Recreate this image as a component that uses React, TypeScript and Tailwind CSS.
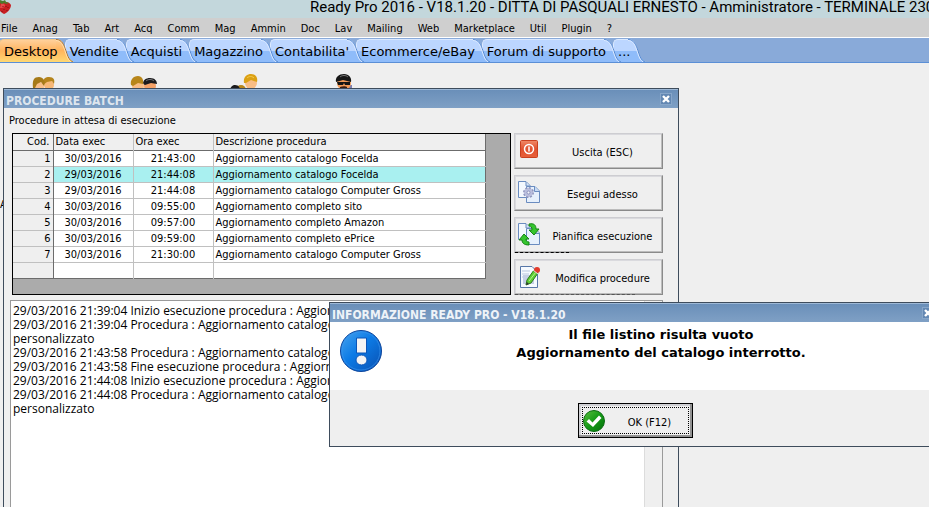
import type { ReactNode } from 'react';

const menuItems = [
  'File', 'Anag', 'Tab', 'Art', 'Acq', 'Comm', 'Mag', 'Ammin', 'Doc',
  'Lav', 'Mailing', 'Web', 'Marketplace', 'Util', 'Plugin', '?',
];

const tabs = [
  'Desktop', 'Vendite', 'Acquisti', 'Magazzino', "Contabilita'",
  'Ecommerce/eBay', 'Forum di supporto', '...',
];

const procedures = [
  { cod: 1, date: '30/03/2016', time: '21:43:00', description: 'Aggiornamento catalogo Focelda' },
  { cod: 2, date: '29/03/2016', time: '21:44:08', description: 'Aggiornamento catalogo Focelda' },
  { cod: 3, date: '29/03/2016', time: '21:44:08', description: 'Aggiornamento catalogo Computer Gross' },
  { cod: 4, date: '30/03/2016', time: '09:55:00', description: 'Aggiornamento completo sito' },
  { cod: 5, date: '30/03/2016', time: '09:57:00', description: 'Aggiornamento completo Amazon' },
  { cod: 6, date: '30/03/2016', time: '09:59:00', description: 'Aggiornamento completo ePrice' },
  { cod: 7, date: '30/03/2016', time: '21:30:00', description: 'Aggiornamento catalogo Computer Gross' },
];

const selectedCod = 2;

const log = [
  '29/03/2016 21:39:04 Inizio esecuzione procedura : Aggiornamento catalogo Focelda',
  '29/03/2016 21:39:04 Procedura : Aggiornamento catalogo Focelda',
  'personalizzato',
  '29/03/2016 21:43:58 Procedura : Aggiornamento catalogo Focelda',
  '29/03/2016 21:43:58 Fine esecuzione procedura : Aggiornamento catalogo Focelda',
  '29/03/2016 21:44:08 Inizio esecuzione procedura : Aggiornamento catalogo Focelda',
  '29/03/2016 21:44:08 Procedura : Aggiornamento catalogo Focelda',
  'personalizzato',
].join('\n');

const StrawberryIcon = () => (
  <svg className="h-[14px] w-[11px] shrink-0" viewBox="0 0 11 14" aria-hidden="true">
    <path d="M0 3C3 1 9 1 11 5C11 9 7 13 4 14C2 13 1 12 0 11Z" fill="#c81f22" />
    <path d="M1 4C3 3 5 4 5 6C4 8 2 8 0 8Z" fill="#e5484a" />
    <path d="M0 0L3 1L5 0L6 2L9 3L6 4L4 3L2 4L0 3Z" fill="#4c7a2c" />
    <path d="M3 6v1M6 6v1M8 7v1M4 9v1M7 10v1M2 11v1" stroke="#7f1014" />
  </svg>
);

const PeopleIcon = ({ kind }: { kind: number }) => {
  if (kind === 0) {
    return (
      <svg className="h-[24px] w-[24px]" viewBox="0 0 24 24" aria-hidden="true">
        <circle cx="17" cy="9" r="5" fill="#f7b878" />
        <path d="M11 9C10 2 14 1 17 1C22 1 23 4 22 8L20 5L15 6Z" fill="#b5841c" />
        <circle cx="7" cy="11" r="5" fill="#f9c08a" />
        <path d="M1 12C0 4 2 1 7 1C11 1 14 5 12 10L9 6L5 8L3 12Z" fill="#a67a18" />
      </svg>
    );
  }
  if (kind === 1) {
    return (
      <svg className="h-[24px] w-[28px]" viewBox="0 0 28 24" aria-hidden="true">
        <circle cx="20" cy="10" r="6" fill="#f5a268" />
        <path d="M13 8C13 4 16 2 20 2C25 2 27 5 27 8L21 7L15 9Z" fill="#1b1b1d" />
        <path d="M16 5C18 3 22 3 24 5" stroke="#77777b" fill="none" />
        <circle cx="8" cy="10" r="6" fill="#f9bd85" />
        <path d="M1 9C0 4 3 0 8 0C12 0 14 4 13 8L8 7L3 10Z" fill="#b8861a" />
      </svg>
    );
  }
  if (kind === 2) {
    return (
      <svg className="h-[26px] w-[28px]" viewBox="0 0 28 26" aria-hidden="true">
        <circle cx="11" cy="16" r="5" fill="#b8861a" />
        <path d="M0 18C0 13 2 11 5 11C9 11 10 14 10 17Z" fill="#1b1b1d" />
        <circle cx="21" cy="9" r="6" fill="#f9bd85" />
        <path d="M14 9C13 3 17 0 21 0C26 0 28 4 27 8L21 6L16 9Z" fill="#dca114" />
        <path d="M17 4C19 2 22 2 24 4" stroke="#f6cf4f" fill="none" />
      </svg>
    );
  }
  return (
    <svg className="h-[26px] w-[18px]" viewBox="0 0 18 26" aria-hidden="true">
      <path d="M12 11h5v8h-5Z" fill="#7b7fb4" />
      <circle cx="9" cy="9" r="7" fill="#f29a57" />
      <path d="M1 8C0 3 4 0 9 0C14 0 17 4 16 8L8 6Z" fill="#161616" />
      <path d="M5 3C7 1 11 1 13 3" stroke="#777" fill="none" />
      <path d="M2 8H15V11H10L9 9L8 11H3Z" fill="#141414" />
      <path d="M5 13C7 12 11 12 12 13V18H5Z" fill="#3a1c10" />
    </svg>
  );
};

const PowerIcon = () => (
  <svg className="mt-px size-[18px]" viewBox="0 0 18 18" aria-hidden="true">
    <defs>
      <linearGradient id="power" x1="0" y1="0" x2="0" y2="1">
        <stop offset="0" stopColor="#f08a68" />
        <stop offset="0.5" stopColor="#e0512f" />
        <stop offset="1" stopColor="#e8603a" />
      </linearGradient>
    </defs>
    <rect x="0.5" y="0.5" width="17" height="17" rx="1" fill="url(#power)" stroke="#c9401f" />
    <circle cx="9" cy="9" r="4.5" fill="none" stroke="#fff" strokeWidth="1.5" />
    <path d="M9 6.5v5" stroke="#fff" strokeWidth="1.5" />
  </svg>
);

const Pages = () => (
  <>
    <path d="M0.5 0.5H8L12 4.5V16.5H0.5Z" fill="#f3f8fe" stroke="#6a8cc0" />
    <path d="M8 1V5H12" fill="#d5e4f7" stroke="#6a8cc0" />
    <path d="M8.5 5.5H17L21.5 10V21.5H8.5Z" fill="#e6f0fc" stroke="#6a8cc0" />
    <path d="M16.5 5.5V10.5H21.5" fill="#c7dbf5" stroke="#6a8cc0" />
  </>
);

const RunIcon = () => (
  <svg className="size-[23px]" viewBox="0 0 23 23" aria-hidden="true">
    <Pages />
    <circle cx="10.5" cy="11.5" r="4.5" fill="#c3c8e2" stroke="#8d94bd" strokeWidth="2" strokeDasharray="2 1.5" />
    <circle cx="10.5" cy="11.5" r="4" fill="#b9bedd" />
    <circle cx="10.5" cy="11.5" r="1.5" fill="#f3f5fb" stroke="#8d94bd" />
  </svg>
);

const ScheduleIcon = () => (
  <svg className="size-[23px]" viewBox="0 0 23 23" aria-hidden="true">
    <Pages />
    <path d="M11 1C16 0 18 2 18 6H21L16 12L11 7H14C14 4 13 3 11 3Z" fill="#35c52e" stroke="#168415" />
    <path d="M11 22C6 22 4 20 4 17H1L6 11L11 16H8C8 18 9 19 11 19Z" fill="#35c52e" stroke="#168415" />
  </svg>
);

const EditIcon = () => (
  <svg className="size-[23px]" viewBox="0 0 23 23" aria-hidden="true">
    <path d="M2.5 1.5H14L19.5 7V22.5H2.5Z" fill="#f6faff" stroke="#5777a8" />
    <path d="M4 6h8M4 9h7M4 12h5" stroke="#b9c7df" />
    <rect x="5" y="10" width="11" height="9" fill="#c5cfe5" />
    <path d="M9 15L16 5L20 8L13 18L8 20Z" fill="#5fce34" stroke="#2c7a1c" />
    <path d="M11 16L18 7" stroke="#b3f08d" />
    <path d="M8 20L9 17L11 19Z" fill="#333" />
    <circle cx="19" cy="5" r="3" fill="#e23a2a" />
    <path d="M15 5L20 9" stroke="#e3e3e3" />
  </svg>
);

const InfoIcon = () => (
  <svg className="size-[42px] shrink-0" viewBox="0 0 42 42" aria-hidden="true">
    <defs>
      <linearGradient id="info" x1="0" y1="0" x2="1" y2="1">
        <stop offset="0" stopColor="#4aa5ee" />
        <stop offset="0.45" stopColor="#0c7be6" />
        <stop offset="1" stopColor="#0a4fb0" />
      </linearGradient>
    </defs>
    <circle cx="21" cy="21" r="20.5" fill="url(#info)" stroke="#0c459c" />
    <circle cx="21" cy="21" r="19" fill="none" stroke="#3c95ec" opacity="0.6" />
    <path d="M16.5 8H26.5V23H16.5Z" fill="#f4f4f4" stroke="#0b55b8" />
    <ellipse cx="21.5" cy="30" rx="5.5" ry="5" fill="#f4f4f4" stroke="#0b55b8" />
  </svg>
);

const CheckIcon = () => (
  <svg className="size-[22px] shrink-0" viewBox="0 0 22 22" aria-hidden="true">
    <defs>
      <linearGradient id="check" x1="0" y1="0" x2="1" y2="1">
        <stop offset="0" stopColor="#5cc03f" />
        <stop offset="0.5" stopColor="#159a17" />
        <stop offset="1" stopColor="#04700c" />
      </linearGradient>
    </defs>
    <circle cx="11" cy="11" r="10.5" fill="url(#check)" stroke="#0c6c12" />
    <path d="M3.5 11.5L6 9L9.5 12.5L16 5.5L18.5 8L10 17Z" fill="#fff" />
  </svg>
);

const CloseButton = () => (
  <button type="button" aria-label="Chiudi" className="flex size-[12px] items-center justify-center border border-[#87a6c9] bg-[#6388b3]">
    <svg className="size-[8px]" viewBox="0 0 8 8" aria-hidden="true">
      <path d="M1 1L7 7M7 1L1 7" stroke="#fff" strokeWidth="2.4" />
    </svg>
  </button>
);

const WindowTitle = ({ title, className }: { title: string; className: string }) => (
  <div className={`flex h-[19px] shrink-0 items-center justify-between border-t border-[#9db8d6] bg-gradient-to-b from-[#6a8fb9] to-[#7fa0c5] pr-[6px] pl-[2px] ${className}`}>
    <h2 className="pt-[3px] text-[12px] leading-[16px] font-bold whitespace-nowrap">{title}</h2>
    <CloseButton />
  </div>
);

const ActionButton = ({ icon, label, className = '' }: { icon: ReactNode; label: string; className?: string }) => (
  <button
    type="button"
    className={`relative flex h-[36px] w-full border border-t-[#cdcdd1] border-r-[#8a8a8a] border-b-[#8a8a8a] border-l-[#cdcdd1] bg-[#efefef] shadow-[inset_-1px_-1px_0_#bcbcbc,inset_1px_1px_0_#dadade] ${className}`}
  >
    <span className="flex w-[28px] shrink-0 justify-center pt-[5px]">{icon}</span>
    <span className="flex-1 self-center pt-[3px] text-center leading-[14px] whitespace-nowrap">{label}</span>
  </button>
);

const Tab = ({ label, active, order }: { label: string; active: boolean; order: number }) => (
  <button type="button" role="tab" aria-selected={active} className="relative h-[23px] pr-[7px] pl-[5px]" style={{ zIndex: order }}>
    <span
      className={`absolute inset-y-0 right-[9px] left-0 rounded-tl-[5px] border-t border-l ${
        active
          ? 'border-[#f4c98a] bg-linear-to-b from-[#ffd09a] from-0% via-[#ffb45c] via-50% to-[#ffd873]'
          : 'border-[#dbe9ff] bg-linear-to-b from-[#bcd6ff] from-50% to-[#8fbcfa] to-50%'
      }`}
    />
    <svg className="absolute top-0 right-[-9px] h-[23px] w-[18px]" viewBox="0 0 18 23" aria-hidden="true">
      <defs>
        <linearGradient id={`slope${order}`} x1="0" y1="0" x2="0" y2="1">
          <stop offset="0" stopColor={active ? '#ffd09a' : '#bcd6ff'} />
          <stop offset="0.5" stopColor={active ? '#ffb45c' : '#bcd6ff'} />
          <stop offset="0.5" stopColor={active ? '#ffb45c' : '#8fbcfa'} />
          <stop offset="1" stopColor={active ? '#ffd873' : '#8fbcfa'} />
        </linearGradient>
      </defs>
      <path d="M0 0C7 0 8 6 10 12C12 18 14 21 18 23H0Z" fill={`url(#slope${order})`} />
      <path d="M0 0.5C6 0.5 8 6 10 12C12 18 13 21 17 23" fill="none" stroke={active ? '#a5743c' : '#5b8cd0'} />
      <path d="M0 1.5C5 1.5 7 6 9 12C11 18 12 21 15 23" fill="none" stroke={active ? '#ffe0b0' : '#dbe9ff'} />
    </svg>
    <span className="relative text-[13px] leading-[25px] whitespace-nowrap">{label}</span>
  </button>
);

const App = () => {
  return (
    <div className="relative flex h-screen flex-col overflow-hidden bg-[#efefef] font-['DejaVu_Sans_Condensed','DejaVu_Sans',sans-serif] text-[11px] text-black">
      <header className="flex h-[18px] shrink-0 items-start gap-[299px] overflow-hidden bg-[#c3d7dc]">
        <StrawberryIcon />
        <h1 className="font-[Roboto,sans-serif] text-[15px] leading-[14px] whitespace-nowrap">
          Ready Pro 2016 - V18.1.20 - DITTA DI PASQUALI ERNESTO - Amministratore - TERMINALE 230
        </h1>
      </header>

      <nav className="flex h-[19px] shrink-0 items-center gap-[15px] bg-[#cfcfcf] pt-[2px] pl-px">
        {menuItems.map((item) => (
          <button key={item} type="button" className="leading-[16px]">{item}</button>
        ))}
      </nav>

      <div role="tablist" className="-ml-px flex h-[26px] shrink-0 items-end border-t border-b border-t-white border-b-[#5b8fd6] bg-[#89aad9] font-['DejaVu_Sans',sans-serif]">
        {tabs.map((tab, index) => (
          <Tab key={tab} label={tab} active={index === 0} order={tabs.length - index} />
        ))}
      </div>

      <main className="flex-1">
        <div className="-ml-[6px] flex pt-[11px]">
          {[0, 1, 2, 3].map((kind) => (
            <div key={kind} className={`flex w-[100px] justify-center ${kind < 2 ? 'pt-[2px]' : ''}`}>
              <PeopleIcon kind={kind} />
            </div>
          ))}
        </div>
        <p className="pt-[97px] leading-[16px]">A</p>
      </main>

      {/* Batch window */}
      <section className="absolute top-[88px] left-[3px] z-10 flex h-[480px] w-[676px] flex-col border border-[#3e4c5c] bg-[#efefef]">
        <WindowTitle title="PROCEDURE BATCH" className="text-[#dde5ee]" />
        <p className="px-[5px] pt-[5px] leading-[16px]">Procedure in attesa di esecuzione</p>

        <div className="flex gap-[3px] pt-[4px] pr-[15px] pl-[8px]">
          <div className="h-[162px] flex-1 border border-black bg-[#ababab]">
            <table className="w-[473px] table-fixed border-collapse border-r border-b border-[#6c6c6c] bg-white leading-[14px]">
              <colgroup>
                <col className="w-[40px]" />
                <col className="w-[80px]" />
                <col className="w-[80px]" />
                <col />
              </colgroup>
              <thead>
                <tr className="h-[16px] border-b border-[#6c6c6c] bg-[#efefef] text-left">
                  <th className="border-r border-[#6c6c6c] p-0 pt-px pr-[3px] text-right font-normal">Cod.</th>
                  <th className="border-r border-[#c0c0c0] p-0 pt-px pl-[2px] font-normal">Data exec</th>
                  <th className="border-r border-[#c0c0c0] p-0 pt-px pl-[2px] font-normal">Ora exec</th>
                  <th className="p-0 pt-px pl-[2px] font-normal">Descrizione procedura</th>
                </tr>
              </thead>
              <tbody>
                {procedures.map((row) => (
                  <tr key={row.cod} className={`h-[16px] border-b border-[#c0c0c0] ${row.cod === selectedCod ? 'bg-[#a9f0f0]' : ''}`}>
                    <td className="border-r border-r-[#6c6c6c] bg-[#efefef] p-0 pt-px pr-[2px] text-right">{row.cod}</td>
                    <td className="border-r border-r-[#c0c0c0] p-0 pt-px text-center">{row.date}</td>
                    <td className="border-r border-r-[#c0c0c0] p-0 pt-px text-center">{row.time}</td>
                    <td className="p-0 pt-px pl-[2px] whitespace-nowrap">{row.description}</td>
                  </tr>
                ))}
                <tr className="h-[16px]">
                  <td className="border-r border-r-[#6c6c6c] bg-[#efefef] p-0" />
                  <td className="border-r border-r-[#c0c0c0] p-0" />
                  <td className="border-r border-r-[#c0c0c0] p-0" />
                  <td className="p-0" />
                </tr>
              </tbody>
            </table>
          </div>

          <div className="flex w-[149px] flex-col justify-between">
            <ActionButton icon={<PowerIcon />} label="Uscita (ESC)" />
            <ActionButton icon={<RunIcon />} label="Esegui adesso" />
            <ActionButton
              icon={<ScheduleIcon />}
              label="Pianifica esecuzione"
              className="after:absolute after:top-full after:left-0 after:w-[54px] after:border-t after:border-dashed after:border-black"
            />
            <ActionButton
              icon={<EditIcon />}
              label="Modifica procedure"
              className="after:absolute after:top-full after:left-0 after:w-[120px] after:border-t after:border-dashed after:border-[#555]"
            />
          </div>
        </div>

        <div className="mt-[5px] mr-[15px] ml-[6px] flex flex-1 border border-[#9a9a9a] bg-white">
          <textarea
            readOnly
            aria-label="Registro esecuzione"
            wrap="off"
            defaultValue={log}
            className="flex-1 resize-none overflow-hidden px-[2px] pt-[3px] font-[Open_Sans,sans-serif] text-[12px] leading-[14px] outline-none"
          />
          <div className="w-[18px] border-l border-[#dcdcdc] bg-[#efefef]" />
        </div>
      </section>

      {/* Message dialog */}
      <section role="dialog" aria-label="Informazione" className="absolute top-[302px] left-[329px] z-20 flex w-[612px] flex-col border border-[#3e4c5c] bg-[#efefef]">
        <WindowTitle title="INFORMAZIONE READY PRO - V18.1.20" className="text-[#eef3f8]" />
        <div className="flex h-[68px] bg-white pt-[4px] pl-[10px]">
          <div className="pt-[4px]">
            <InfoIcon />
          </div>
          <p className="flex-1 text-center font-['DejaVu_Sans',sans-serif] text-[13px] leading-[18px] font-bold">
            Il file listino risulta vuoto
            <br />
            Aggiornamento del catalogo interrotto.
          </p>
        </div>
        <div className="flex justify-center pt-[13px] pb-[8px]">
          <button
            type="button"
            className="flex h-[35px] w-[115px] border border-black bg-[#efefef] p-px shadow-[inset_-2px_-2px_0_#929292,inset_2px_2px_0_#d0d0d4]"
          >
            <span className="m-[2px] flex h-[27px] flex-1 items-center border border-dotted border-black">
              <CheckIcon />
              <span className="flex-1 pt-[5px] pl-[7px] text-center">OK (F12)</span>
            </span>
          </button>
        </div>
      </section>
    </div>
  );
};

export default App;
